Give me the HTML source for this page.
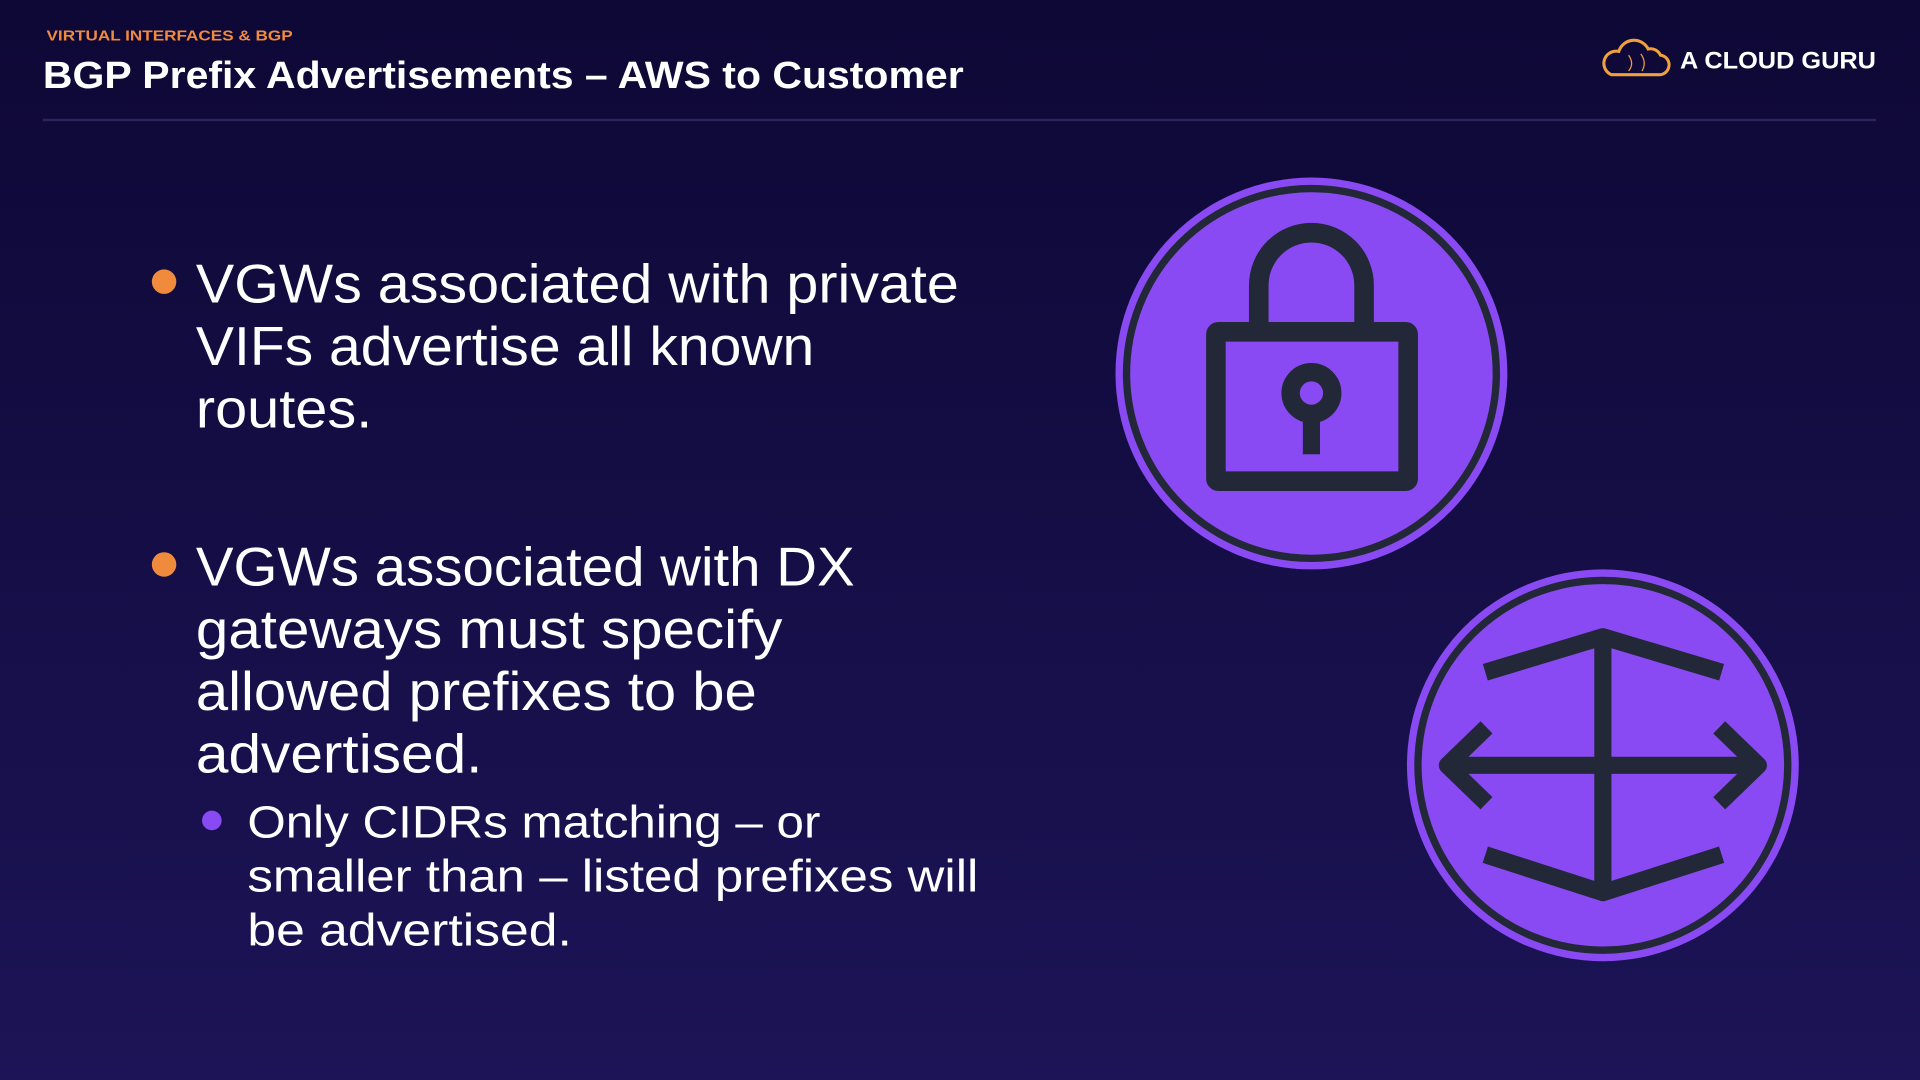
<!DOCTYPE html>
<html><head><meta charset="utf-8"><style>
html,body{margin:0;padding:0;width:1920px;height:1080px;overflow:hidden;background:#110b3a}
svg{display:block}
text{font-family:"Liberation Sans",sans-serif}
</style></head><body>
<svg width="1920" height="1080" viewBox="0 0 1568 882" xmlns="http://www.w3.org/2000/svg">
<defs><linearGradient id="bg" x1="0" y1="0" x2="0" y2="1">
<stop offset="0" stop-color="#0e0836"/><stop offset="1" stop-color="#1c1456"/></linearGradient></defs>
<rect width="1568" height="882" fill="url(#bg)"/>
<text x="38" y="33" font-size="12" font-weight="bold" fill="#f08a3c" textLength="201" lengthAdjust="spacingAndGlyphs">VIRTUAL INTERFACES &amp; BGP</text>
<text x="35" y="72" font-size="31" font-weight="bold" fill="#fff" textLength="752" lengthAdjust="spacingAndGlyphs">BGP Prefix Advertisements – AWS to Customer</text>
<rect x="35" y="97" width="1497" height="2" fill="#2a2560"/>
<path d="M1316 61 H1354 A8 8 0 0 0 1356 45 A9 9 0 0 0 1346 40 A13 13 0 0 0 1322 42 A10 10 0 0 0 1316 61 Z" fill="none" stroke="#f0a03c" stroke-width="2.5"/>
<path d="M1330 45 Q1335 52 1330 58 M1340 44 Q1345 51 1341 58" fill="none" stroke="#f0a03c" stroke-width="1"/>
<text x="1372" y="56" font-size="19.5" font-weight="bold" fill="#fff" textLength="160" lengthAdjust="spacingAndGlyphs">A CLOUD GURU</text>
<g fill="#fff" font-size="45">
<circle cx="134" cy="230" r="10" fill="#f08a3c"/>
<text x="160" y="247" textLength="623" lengthAdjust="spacingAndGlyphs">VGWs associated with private</text>
<text x="160" y="298" textLength="505" lengthAdjust="spacingAndGlyphs">VIFs advertise all known</text>
<text x="160" y="349" textLength="144" lengthAdjust="spacingAndGlyphs">routes.</text>
<circle cx="134" cy="461" r="10" fill="#f08a3c"/>
<text x="160" y="478" textLength="538" lengthAdjust="spacingAndGlyphs">VGWs associated with DX</text>
<text x="160" y="529" textLength="479" lengthAdjust="spacingAndGlyphs">gateways must specify</text>
<text x="160" y="580" textLength="458" lengthAdjust="spacingAndGlyphs">allowed prefixes to be</text>
<text x="160" y="631" textLength="234" lengthAdjust="spacingAndGlyphs">advertised.</text>
</g>
<g fill="#fff" font-size="37">
<circle cx="173" cy="670" r="8" fill="#8a4af3"/>
<text x="202" y="684" textLength="468" lengthAdjust="spacingAndGlyphs">Only CIDRs matching – or</text>
<text x="202" y="728" textLength="597" lengthAdjust="spacingAndGlyphs">smaller than – listed prefixes will</text>
<text x="202" y="772" textLength="265" lengthAdjust="spacingAndGlyphs">be advertised.</text>
</g>
<g>
<circle cx="1071" cy="305" r="160" fill="#8a4af3"/>
<circle cx="1071" cy="305" r="151" fill="none" stroke="#232838" stroke-width="6"/>
<path d="M1028 264 V233 A43 43 0 0 1 1114 233 V264" fill="none" stroke="#232838" stroke-width="16"/>
<rect x="993" y="271" width="157" height="122" rx="2" fill="none" stroke="#232838" stroke-width="16"/>
<circle cx="1071" cy="321" r="17" fill="none" stroke="#232838" stroke-width="15"/>
<rect x="1064" y="335" width="14" height="36" fill="#232838"/>
</g>
<g>
<circle cx="1309" cy="625" r="160" fill="#8a4af3"/>
<circle cx="1309" cy="625" r="151" fill="none" stroke="#232838" stroke-width="6"/>
<g fill="none" stroke="#232838" stroke-width="14" stroke-linejoin="round">
<path d="M1213 549 L1309 520 L1406 549"/>
<path d="M1213 698 L1309 729 L1406 698"/>
<path d="M1309 520 V729"/>
<path d="M1182 625 H1438"/>
<path d="M1214 594 L1182 625 L1214 656"/>
<path d="M1404 594 L1436 625 L1404 656"/>
</g>
</g>
</svg>
</body></html>
